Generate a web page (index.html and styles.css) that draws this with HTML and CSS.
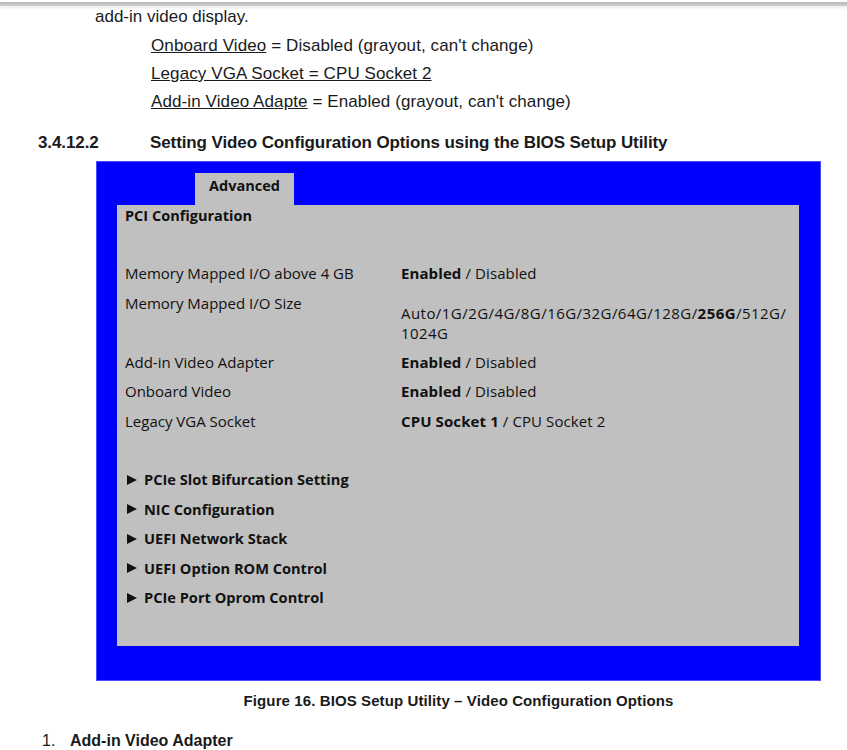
FILE: index.html
```html
<!doctype html>
<html>
  <head>
    <meta http-equiv="content-type" content="text/html; charset=UTF-8">
    <title>Video Configuration</title>
    <link rel="stylesheet" href="styles.css">
  </head>
  <body>
    <div class="topbar"></div>

    <div class="page">
      <p class="lead">add-in video display.</p>
      <ul class="settings">
        <li><u>Onboard Video</u> = Disabled (grayout, can't change)</li>
        <li><u>Legacy VGA Socket = CPU Socket 2</u></li>
        <li><u>Add-in Video Adapte</u> = Enabled (grayout, can't change)</li>
      </ul>

      <h3 class="heading"><span class="num">3.4.12.2</span>Setting Video Configuration Options using the BIOS Setup Utility</h3>

      <div class="bios">
        <div class="tabs">
          <div class="tab">Advanced</div>
        </div>
        <div class="panel">
          <div class="title">PCI Configuration</div>

          <div class="rows">
            <div class="row">
              <div class="label">Memory Mapped I/O above 4 GB</div>
              <div class="value"><b>Enabled</b> / Disabled</div>
            </div>
            <div class="row">
              <div class="label">Memory Mapped I/O Size</div>
              <div class="value multi">Auto/1G/2G/4G/8G/16G/32G/64G/128G/<b>256G</b>/512G/<br>1024G</div>
            </div>
            <div class="row">
              <div class="label">Add-in Video Adapter</div>
              <div class="value"><b>Enabled</b> / Disabled</div>
            </div>
            <div class="row">
              <div class="label">Onboard Video</div>
              <div class="value"><b>Enabled</b> / Disabled</div>
            </div>
            <div class="row">
              <div class="label">Legacy VGA Socket</div>
              <div class="value"><b>CPU Socket 1</b> / CPU Socket 2</div>
            </div>
          </div>

          <ul class="submenus">
            <li><span class="arrow"></span>PCIe Slot Bifurcation Setting</li>
            <li><span class="arrow"></span>NIC Configuration</li>
            <li><span class="arrow"></span>UEFI Network Stack</li>
            <li><span class="arrow"></span>UEFI Option ROM Control</li>
            <li><span class="arrow"></span>PCIe Port Oprom Control</li>
          </ul>
        </div>
      </div>

      <p class="caption">Figure 16. BIOS Setup Utility &ndash; Video Configuration Options</p>

      <ol class="steps">
        <li><span class="n">1.</span><b>Add-in Video Adapter</b></li>
      </ol>
    </div>
  </body>
</html>
```

FILE: styles.css
```css
ul, ol {
  list-style-type: none;
  padding: 0;
  margin: 0;
}

p, h3 {
  margin: 0;
}

body {
  margin: 0;
  background-color: white;
  color: #1a1a1a;
  font-family: "Liberation Sans", Arial, sans-serif;
}

.topbar {
  margin-top: 2px;
  height: 4px;
  background: linear-gradient(#b8b8b8, #d0d0d0);
  box-shadow: 0 2px 3px rgba(0, 0, 0, 0.08);
}

.page {
  padding-top: 1px;
}

.lead {
  padding-left: 95px;
  font-size: 17px;
  line-height: 20px;
}

.settings {
  padding-left: 151px;
  margin-top: 5px;
}

.settings > li {
  font-size: 17px;
  line-height: 28px;
  letter-spacing: 0.1px;
}

.heading {
  display: flex;
  margin-top: 17px;
  padding-left: 38px;
  font-size: 17px;
  line-height: 20px;
  font-weight: bold;
  letter-spacing: -0.1px;
}

.heading > .num {
  width: 112px;
}

.bios {
  margin: 8px 0 0 96px;
  width: 725px;
  box-sizing: border-box;
  background-color: #0000ff;
  border: 1px solid #4a4aff;
  padding: 11px 21px 34px 20px;
  font-family: "Open Sans", sans-serif;
  color: #111;
}

.tabs {
  display: flex;
  padding-left: 78px;
}

.tab {
  width: 99px;
  height: 32px;
  box-sizing: border-box;
  background-color: #c0c0c0;
  padding: 3px 0 0 14px;
  font-size: 14.5px;
  line-height: 20px;
  font-weight: bold;
}

.panel {
  background-color: #c0c0c0;
  padding: 0 8px 33px 8px;
  height: 441px;
  box-sizing: border-box;
}

.title {
  font-size: 14.5px;
  font-weight: bold;
  line-height: 22px;
}

.rows {
  margin-top: 32px;
}

.row {
  display: flex;
  font-size: 15px;
  line-height: 29.5px;
}

.label {
  width: 276px;
}

.value {
  letter-spacing: 0.1px;
}

.value.multi {
  padding: 14px 0 5px 0;
  line-height: 20px;
  letter-spacing: 0.45px;
}

.submenus {
  margin-top: 29px;
}

.submenus > li {
  display: flex;
  align-items: center;
  font-size: 14.6px;
  font-weight: bold;
  line-height: 29.5px;
}

.arrow {
  width: 0;
  height: 0;
  margin: 0 7px 0 2px;
  border-top: 5px solid transparent;
  border-bottom: 5px solid transparent;
  border-left: 10px solid #111;
}

.caption {
  margin-top: 10px;
  text-align: center;
  padding-left: 70px;
  font-size: 15px;
  line-height: 20px;
  font-weight: bold;
  letter-spacing: 0.1px;
}

.steps {
  margin-top: 20px;
  padding-left: 42px;
}

.steps > li {
  font-size: 16px;
  line-height: 20px;
}

.steps .n {
  display: inline-block;
  width: 28px;
}
```
